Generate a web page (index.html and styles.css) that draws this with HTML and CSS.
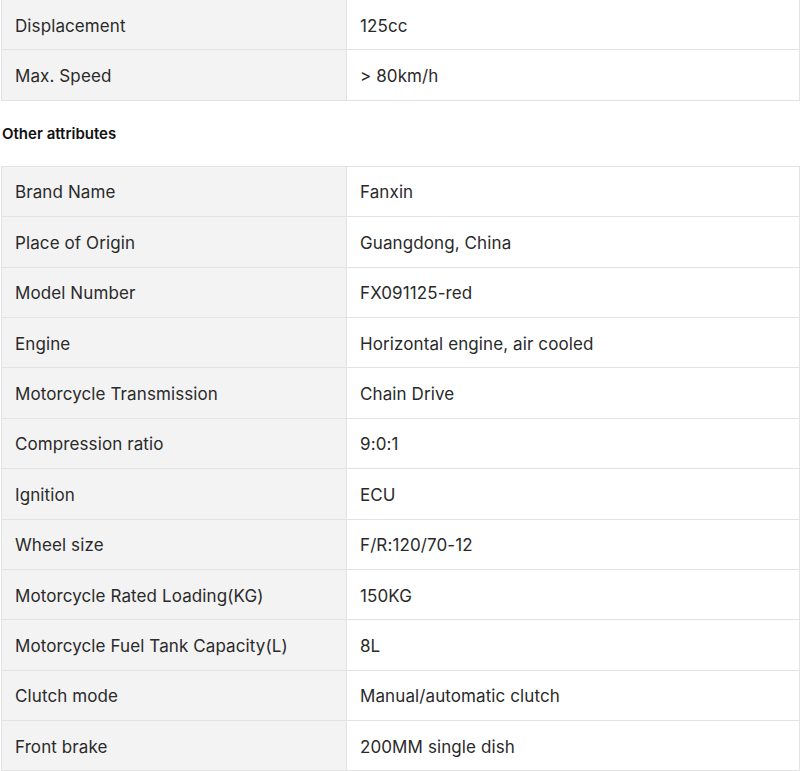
FILE: index.html
```html
<!DOCTYPE html>
<html>
<head>
<meta charset="utf-8">
<link rel="stylesheet" href="styles.css">
</head>
<body>
<div class="page">
  <table class="attrs">
    <tr><td class="k">Displacement</td><td class="v">125cc</td></tr>
    <tr><td class="k">Max. Speed</td><td class="v">&gt; 80km/h</td></tr>
  </table>
  <h3 class="title">Other attributes</h3>
  <table class="attrs">
    <tr><td class="k">Brand Name</td><td class="v">Fanxin</td></tr>
    <tr><td class="k">Place of Origin</td><td class="v">Guangdong, China</td></tr>
    <tr><td class="k">Model Number</td><td class="v">FX091125-red</td></tr>
    <tr><td class="k">Engine</td><td class="v">Horizontal engine, air cooled</td></tr>
    <tr><td class="k">Motorcycle Transmission</td><td class="v">Chain Drive</td></tr>
    <tr><td class="k">Compression ratio</td><td class="v">9:0:1</td></tr>
    <tr><td class="k">Ignition</td><td class="v">ECU</td></tr>
    <tr><td class="k">Wheel size</td><td class="v">F/R:120/70-12</td></tr>
    <tr><td class="k">Motorcycle Rated Loading(KG)</td><td class="v">150KG</td></tr>
    <tr><td class="k">Motorcycle Fuel Tank Capacity(L)</td><td class="v">8L</td></tr>
    <tr><td class="k">Clutch mode</td><td class="v">Manual/automatic clutch</td></tr>
    <tr><td class="k">Front brake</td><td class="v">200MM single dish</td></tr>
  </table>
</div>
</body>
</html>
```
FILE: styles.css
```css
html, body {
  margin: 0;
  padding: 0;
  background: #fff;
}
.page {
  margin: -1px 0 0 1px;
  font-family: Inter, "Noto Sans", sans-serif;
  color: #2a2a2a;
}
.attrs {
  width: 100%;
  border-collapse: collapse;
  table-layout: fixed;
  font-size: 17px;
  letter-spacing: 0.1px;
}
.attrs td {
  border: 1px solid #e3e3e3;
  height: 50.4px;
  box-sizing: border-box;
  padding: 2px 12px 0 13px;
  vertical-align: middle;
  line-height: 20px;
}
.attrs td.k {
  width: 345px;
  background: #f3f3f3;
  padding-left: 13px;
}
.attrs td.v {
  background: #fff;
}
.title {
  margin: 0;
  height: 65px;
  line-height: 66px;
  font-size: 15px;
  font-weight: 600;
  color: #111;
  padding-left: 1px;
}
```
